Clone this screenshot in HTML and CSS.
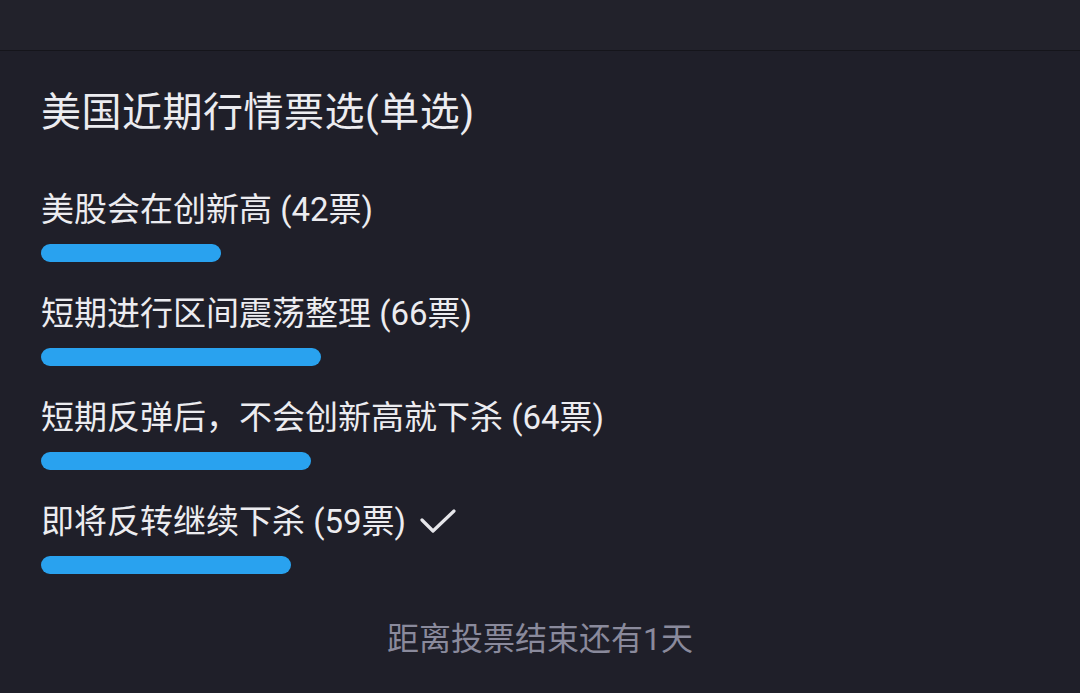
FILE: index.html
```html
<!DOCTYPE html>
<html>
<head>
    <title>美国近期行情票选</title>
    <meta name="viewport" content="width=device-width, initial-scale=1">
    <link rel="stylesheet" href="styles.css">
</head>
<body>
    <div class="topbar"></div>
    <div class="poll">
        <h1 class="poll-title">美国近期行情票选(单选)</h1>
        <div class="options">
            <div class="option">
                <div class="option-label"><span>美股会在创新高 (42票)</span></div>
                <div class="bar" style="width: 180px"></div>
            </div>
            <div class="option">
                <div class="option-label"><span>短期进行区间震荡整理 (66票)</span></div>
                <div class="bar" style="width: 280px"></div>
            </div>
            <div class="option">
                <div class="option-label"><span>短期反弹后，不会创新高就下杀 (64票)</span></div>
                <div class="bar" style="width: 270px"></div>
            </div>
            <div class="option">
                <div class="option-label">
                    <span>即将反转继续下杀 (59票)</span>
                    <svg class="check" width="36" height="26" viewBox="0 0 36 26">
                        <path d="M2 11 L13 22 L34 2" fill="none" stroke="#e6e6ea" stroke-width="3.2" stroke-linecap="round" stroke-linejoin="round"/>
                    </svg>
                </div>
                <div class="bar" style="width: 250px"></div>
            </div>
        </div>
        <div class="poll-footer">距离投票结束还有1天</div>
    </div>
</body>
</html>
```

FILE: styles.css
```css
body {
    margin: 0;
    background-color: #1f1f29;
    font-family: Roboto, "Noto Sans CJK SC", sans-serif;
    color: #ececf0;
}
.topbar {
    height: 50px;
    background-color: #22222b;
    border-bottom: 1px solid #15151b;
}
.poll {
    padding: 38px 41px 0;
}
.poll-title {
    margin: 0;
    font-size: 40px;
    font-weight: normal;
    line-height: 48px;
    letter-spacing: 0.5px;
}
.options {
    margin-top: 53px;
}
.option {
    margin-bottom: 32px;
}
.option:last-child {
    margin-bottom: 0;
}
.option-label {
    display: flex;
    align-items: center;
    height: 40px;
    font-size: 33px;
    line-height: 40px;
    white-space: nowrap;
}
.check {
    margin-left: 14px;
}
.bar {
    height: 18px;
    margin-top: 14px;
    border-radius: 9px;
    background-color: #29a2ef;
}
.poll-footer {
    margin-top: 45px;
    text-align: center;
    font-size: 32px;
    line-height: 40px;
    color: #8a8a9c;
}
```
